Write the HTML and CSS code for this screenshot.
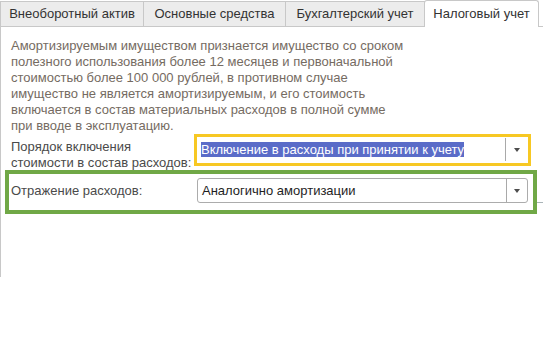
FILE: index.html
```html
<!DOCTYPE html>
<html lang="ru">
<head>
<meta charset="utf-8">
<title>Налоговый учет</title>
<link rel="stylesheet" href="styles.css">
</head>
<body>
<div class="tabs">
  <div class="tab tab-1">Внеоборотный актив</div>
  <div class="tab tab-2">Основные средства</div>
  <div class="tab tab-3">Бухгалтерский учет</div>
  <div class="tab tab-active">Налоговый учет</div>
</div>
<div class="panel">
  <p class="note">Амортизируемым имуществом признается имущество со сроком<br>полезного использования более 12 месяцев и первоначальной<br>стоимостью более 100 000 рублей, в противном случае<br>имущество не является амортизируемым, и его стоимость<br>включается в состав материальных расходов в полной сумме<br>при вводе в эксплуатацию.</p>
  <div class="row row-order">
    <div class="label label-two">Порядок включения<br>стоимости в состав расходов:</div>
    <div class="combo combo-focused">
      <div class="combo-text"><span class="selected">Включение в расходы при принятии к учету</span></div>
      <div class="combo-btn"><span class="arrow"></span></div>
    </div>
  </div>
  <div class="row row-highlight">
    <div class="label label-one">Отражение расходов:</div>
    <div class="combo combo-plain">
      <div class="combo-text">Аналогично амортизации</div>
      <div class="combo-btn"><span class="arrow"></span></div>
    </div>
  </div>
</div>
</body>
</html>
```
FILE: styles.css
```css
html, body {
  margin: 0;
  padding: 0;
  background: #ffffff;
}
body {
  font-family: "Liberation Sans", Arial, sans-serif;
  font-size: 13px;
  color: #4a4a4a;
}
.tabs {
  display: flex;
  align-items: flex-end;
  height: 26px;
  border-bottom: 1px solid #c8c8c8;
}
.tab {
  box-sizing: border-box;
  height: 25px;
  line-height: 24px;
  text-align: center;
  white-space: nowrap;
  background: #ececec;
  border: 1px solid #c8c8c8;
  border-left: none;
  border-bottom: none;
  color: #333333;
}
.tab-1 { width: 144px; border-left: 1px solid #c8c8c8; }
.tab-2 { width: 142px; }
.tab-3 { width: 139px; }
.tab-active {
  position: relative;
  width: 115px;
  height: 27px;
  line-height: 26px;
  margin-left: -1px;
  margin-bottom: -1px;
  background: #ffffff;
  border-left: 1px solid #c8c8c8;
  border-radius: 3px 3px 0 0;
  color: #333333;
}
.panel {
  box-sizing: border-box;
  height: 250px;
  border-left: 1px solid #c8c8c8;
  padding-top: 11px;
}
.note {
  margin: 0;
  padding-left: 10px;
  line-height: 16px;
  color: #756b62;
  white-space: nowrap;
}
.row {
  display: flex;
  align-items: flex-start;
}
.row-order {
  padding-left: 10px;
}
.label {
  line-height: 16px;
  color: #4a4a4a;
  white-space: nowrap;
}
.label-two {
  width: 183px;
  padding-top: 5px;
}
.combo {
  box-sizing: border-box;
  display: flex;
  background: #ffffff;
}
.combo-focused {
  width: 337px;
  height: 32px;
  border: 3px solid #f7c823;
}
.combo-focused .combo-text {
  padding: 5px 0 0 4px;
}
.combo-focused .combo-btn {
  width: 22px;
  margin: 1px 0 2px;
}
.selected {
  display: inline-block;
  height: 15px;
  line-height: 15px;
  background: #5a6cc8;
  color: #ffffff;
}
.combo-text {
  flex: 1;
  white-space: nowrap;
  color: #1e1e1e;
}
.combo-btn {
  display: flex;
  align-items: center;
  justify-content: center;
  border-left: 1px solid #a9a9a9;
}
.arrow {
  width: 0;
  height: 0;
  border-left: 3.5px solid transparent;
  border-right: 3.5px solid transparent;
  border-top: 4px solid #4d4d4d;
  margin-top: 1px;
}
.row-highlight {
  position: relative;
  box-sizing: border-box;
  width: 532px;
  margin: -1px 0 0 4px;
  border: 4px solid #70a846;
  padding: 4px 0 7px 2px;
  align-items: center;
}
.row-highlight::after {
  content: "";
  position: absolute;
  left: calc(100% + 4px);
  top: 28px;
  width: 6px;
  height: 1px;
  background: #aab4b8;
}
.label-one {
  width: 186px;
}
.combo-plain {
  width: 331px;
  height: 25px;
  border: 1px solid #acacac;
  border-radius: 3px;
}
.combo-plain .combo-text {
  line-height: 23px;
  padding-left: 4px;
}
.combo-plain .combo-btn {
  width: 20px;
}
```
